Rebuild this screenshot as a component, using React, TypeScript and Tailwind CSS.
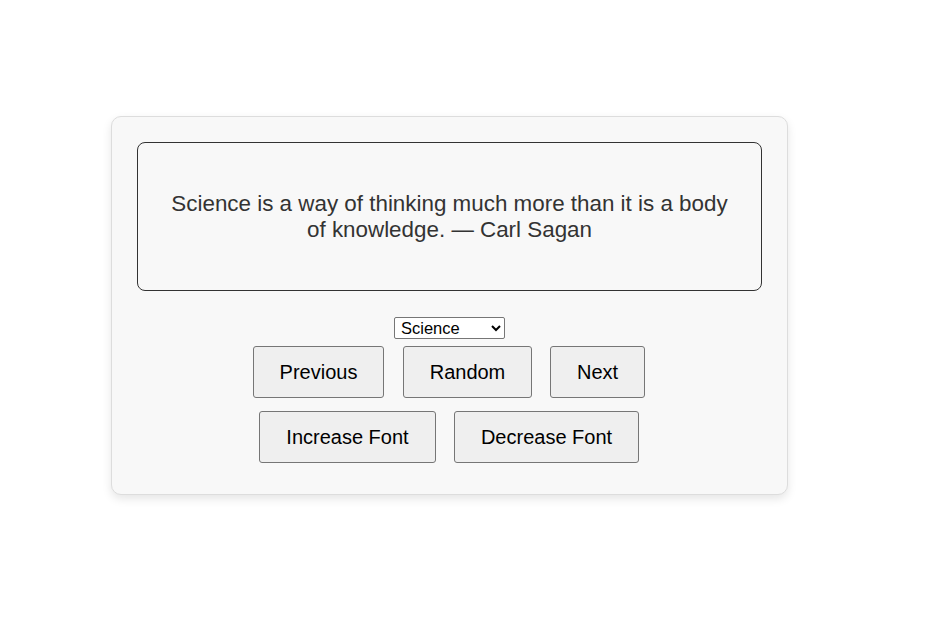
import React, { useState } from "react";

export default function App() {
  const [cat, setCat] = useState("Science");
  const btn =
    "h-[52px] border border-[#767676] rounded-[3px] bg-[#efefef] text-[20px] text-black flex items-center justify-center";
  return (
    <div
      className="w-[925px] h-[626px] bg-white pt-[116px] pl-[111px]"
      style={{ fontFamily: '"Liberation Sans", Arial, sans-serif' }}
    >
      <div className="w-[677px] h-[379px] bg-[#f8f8f8] border border-[#dddddd] rounded-[10px] shadow-[0_4px_10px_rgba(0,0,0,0.1)] p-[25px] flex flex-col items-center">
        <div className="w-[625px] h-[149px] border border-[#333333] rounded-[8px] flex items-center justify-center px-[30px] text-center text-[22.4px] leading-[26px] text-[#333333]">
          Science is a way of thinking much more than it is a body of knowledge. — Carl Sagan
        </div>
        <select
          value={cat}
          onChange={(e) => setCat(e.target.value)}
          className="mt-[26px] w-[111px] h-[22px] border border-[#767676] rounded-[2px] bg-white text-[16.5px] leading-[18px] text-black pl-[2px]"
        >
          <option>Science</option>
          <option>Life</option>
          <option>Humor</option>
        </select>
        <div className="mt-[7px] w-[393px] flex">
          <button className={`${btn} w-[131px]`}>Previous</button>
          <button className={`${btn} w-[129px] ml-[19px]`}>Random</button>
          <button className={`${btn} w-[95px] ml-[18px]`}>Next</button>
        </div>
        <div className="mt-[13px] w-[381px] flex">
          <button className={`${btn} w-[177px]`}>Increase Font</button>
          <button className={`${btn} w-[185px] ml-[18px]`}>Decrease Font</button>
        </div>
      </div>
    </div>
  );
}
